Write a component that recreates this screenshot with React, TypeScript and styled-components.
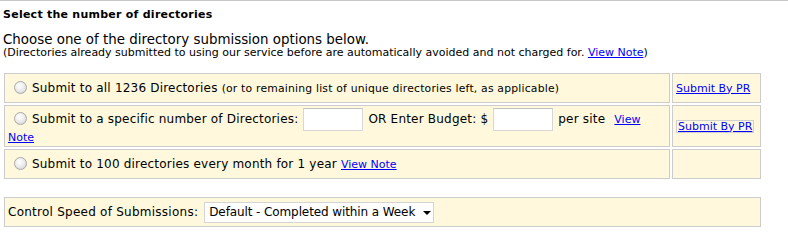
import React from "react";
import styled, { createGlobalStyle } from "styled-components";

const GlobalStyle = createGlobalStyle`
  html, body {
    margin: 0;
    padding: 0;
    background: #fff;
  }
  body {
    font-family: "DejaVu Sans", Verdana, sans-serif;
    color: #000;
  }
`;

const Page = styled.div`
  width: 788px;
  border-top: 1px solid #c8c8c8;
  padding: 0 0 0 3px;
  box-sizing: border-box;
`;

const Title = styled.h3`
  margin: 7px 0 0 0;
  font-size: 11px;
  letter-spacing: 0.25px;
  font-weight: bold;
  line-height: 14px;
`;

const Intro = styled.p`
  margin: 10px 0 0 0;
  font-size: 13.4px;
  line-height: 15px;
`;

const Small = styled.span`
  font-size: 10.8px;
`;

const SmallNote = styled.p`
  margin: 0;
  font-size: 11px;
  line-height: 12px;
`;

const Link = styled.a`
  color: #0000ff;
  text-decoration: underline;
  font-size: 11px;
  letter-spacing: 0;
  cursor: pointer;
`;

const OptionsGrid = styled.div`
  display: grid;
  grid-template-columns: 666px 89px;
  gap: 2px;
  margin: 14px 0 0 1px;
`;

const Cell = styled.div<{ $tall?: boolean }>`
  box-sizing: border-box;
  height: ${(p) => (p.$tall ? "42px" : "30px")};
  background: #fff8dc;
  border: 1px solid #cccccc;
  padding: 0 3px;
  display: flex;
  align-items: center;
  font-size: 12px;
  letter-spacing: 0.2px;
`;

const OptionText = styled.div`
  line-height: 14px;
  white-space: nowrap;
`;

const WrapText = styled.div`
  line-height: 13px;
  width: 640px;
`;

const Radio = styled.input.attrs({ type: "radio" })`
  appearance: none;
  width: 13px;
  height: 13px;
  margin: 0 5px 0 6px;
  border-radius: 50%;
  border: 1px solid #a8a8a8;
  background: radial-gradient(circle at 40% 35%, #ffffff 0%, #f0f0f0 40%, #cfcfcf 100%);
  vertical-align: -2px;
  box-sizing: border-box;
`;

const NumberBox = styled.input.attrs({ type: "text" })`
  box-sizing: border-box;
  width: 60px;
  height: 23px;
  margin: 0 5px 0 5px;
  border: 1px solid #d6d6d6;
  border-top-color: #c2c2c2;
  background: #fff;
  vertical-align: middle;
`;

const Gap = styled.span`
  display: inline-block;
  width: 9px;
`;

const PrButton = styled.span`
  display: inline-block;
  border: 1px solid #cfcfcf;
  padding: 0 1px;
  line-height: 11px;
`;

const SpeedBar = styled.div`
  box-sizing: border-box;
  width: 757px;
  height: 30px;
  margin: 18px 0 0 1px;
  background: #fff8dc;
  border: 1px solid #cccccc;
  padding: 0 3px;
  display: flex;
  align-items: center;
  gap: 6px;
  font-size: 12px;
  letter-spacing: 0.25px;
`;

const SelectWrap = styled.div`
  position: relative;
  width: 230px;
  height: 21px;
`;

const Select = styled.select`
  appearance: none;
  box-sizing: border-box;
  width: 100%;
  height: 100%;
  border: 1px solid #d4d4d4;
  background: #fff;
  font-family: "DejaVu Sans", Verdana, sans-serif;
  font-size: 12px;
  letter-spacing: -0.1px;
  color: #000;
  padding: 0 0 0 4px;
`;

const Arrow = styled.svg`
  position: absolute;
  right: 3px;
  top: 9px;
  pointer-events: none;
`;

export default function App() {
  return (
    <Page>
      <GlobalStyle />
      <Title>Select the number of directories</Title>
      <Intro>Choose one of the directory submission options below.</Intro>
      <SmallNote>
        (Directories already submitted to using our service before are
        automatically avoided and not charged for. <Link>View Note</Link>)
      </SmallNote>

      <OptionsGrid>
        <Cell>
          <OptionText>
            <Radio name="opt" />
            Submit to all 1236 Directories{" "}
            <Small>(or to remaining list of unique directories left, as applicable)</Small>
          </OptionText>
        </Cell>
        <Cell>
          <Link>Submit By PR</Link>
        </Cell>

        <Cell $tall>
          <WrapText>
            <Radio name="opt" />
            Submit to a specific number of Directories:
            <NumberBox />
            OR Enter Budget: $
            <NumberBox />
            per site<Gap />
            <Link>View Note</Link>
          </WrapText>
        </Cell>
        <Cell $tall>
          <PrButton>
            <Link>Submit By PR</Link>
          </PrButton>
        </Cell>

        <Cell>
          <OptionText>
            <Radio name="opt" />
            Submit to 100 directories every month for 1 year{" "}
            <Link>View Note</Link>
          </OptionText>
        </Cell>
        <Cell />
      </OptionsGrid>

      <SpeedBar>
        Control Speed of Submissions:
        <SelectWrap>
          <Select defaultValue="week">
            <option value="week">Default - Completed within a Week</option>
          </Select>
          <Arrow width="8" height="4" viewBox="0 0 8 4">
            <path d="M0 0H8L4 4Z" fill="#000" />
          </Arrow>
        </SelectWrap>
      </SpeedBar>
    </Page>
  );
}
